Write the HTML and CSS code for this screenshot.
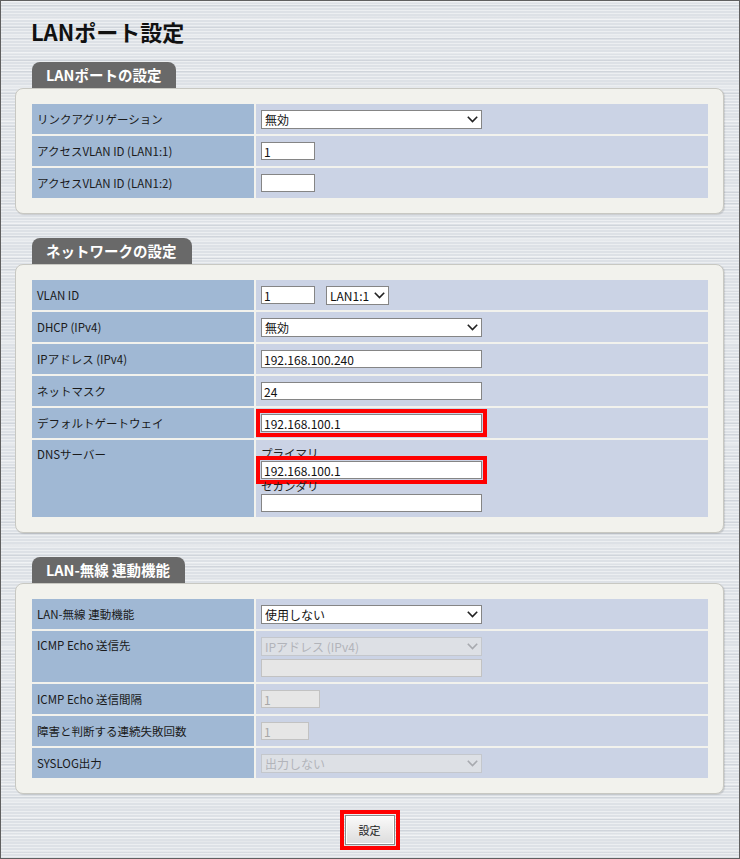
FILE: index.html
```html
<!DOCTYPE html>
<html lang="ja">
<head>
    <meta charset="UTF-8">
    <title>LANポート設定</title>
    <link rel="stylesheet" href="styles.css">
</head>
<body>
    <div class="page">
        <h1 class="page-title">LANポート設定</h1>

        <section class="group">
            <h2 class="group-tab">LANポートの設定</h2>
            <div class="group-box">
                <div class="form-grid">
                    <div class="label">リンクアグリゲーション</div>
                    <div class="value">
                        <select class="select-wide"><option>無効</option></select>
                    </div>
                    <div class="label">アクセスVLAN ID (LAN1:1)</div>
                    <div class="value"><input type="text" class="input-short" value="1"></div>
                    <div class="label">アクセスVLAN ID (LAN1:2)</div>
                    <div class="value"><input type="text" class="input-short" value=""></div>
                </div>
            </div>
        </section>

        <section class="group">
            <h2 class="group-tab">ネットワークの設定</h2>
            <div class="group-box">
                <div class="form-grid">
                    <div class="label">VLAN ID</div>
                    <div class="value">
                        <input type="text" class="input-short" value="1">
                        <select class="select-port"><option>LAN1:1</option></select>
                    </div>
                    <div class="label">DHCP (IPv4)</div>
                    <div class="value">
                        <select class="select-wide"><option>無効</option></select>
                    </div>
                    <div class="label">IPアドレス (IPv4)</div>
                    <div class="value"><input type="text" class="input-wide" value="192.168.100.240"></div>
                    <div class="label">ネットマスク</div>
                    <div class="value"><input type="text" class="input-wide" value="24"></div>
                    <div class="label">デフォルトゲートウェイ</div>
                    <div class="value"><input type="text" class="input-wide marked" value="192.168.100.1"></div>
                    <div class="label label-top">DNSサーバー</div>
                    <div class="value value-stack">
                        <span class="caption">プライマリ</span>
                        <input type="text" class="input-wide marked" value="192.168.100.1">
                        <span class="caption">セカンダリ</span>
                        <input type="text" class="input-wide" value="">
                    </div>
                </div>
            </div>
        </section>

        <section class="group">
            <h2 class="group-tab">LAN-無線 連動機能</h2>
            <div class="group-box">
                <div class="form-grid">
                    <div class="label">LAN-無線 連動機能</div>
                    <div class="value">
                        <select class="select-wide"><option>使用しない</option></select>
                    </div>
                    <div class="label label-top">ICMP Echo 送信先</div>
                    <div class="value value-stack value-pair">
                        <select class="select-wide" disabled><option>IPアドレス (IPv4)</option></select>
                        <input type="text" class="input-wide" value="" disabled>
                    </div>
                    <div class="label">ICMP Echo 送信間隔</div>
                    <div class="value"><input type="text" class="input-interval" value="1" disabled></div>
                    <div class="label">障害と判断する連続失敗回数</div>
                    <div class="value"><input type="text" class="input-count" value="1" disabled></div>
                    <div class="label">SYSLOG出力</div>
                    <div class="value">
                        <select class="select-wide" disabled><option>出力しない</option></select>
                    </div>
                </div>
            </div>
        </section>

        <div class="actions">
            <button class="submit-button marked">設定</button>
        </div>
    </div>
</body>
</html>
```

FILE: styles.css
```css
html, body {
    margin: 0;
    padding: 0;
}

body {
    font-family: "Noto Sans CJK JP", "Noto Sans", sans-serif;
    color: #222;
}

.page {
    box-sizing: border-box;
    height: 859px;
    padding: 16px 15px 0 14px;
    border: 1px solid #606060;
    background-color: #dde1e6;
    background-image:
        repeating-linear-gradient(to bottom, rgba(255,255,255,0.45) 0 1px, transparent 1px 3px),
        repeating-linear-gradient(to bottom, transparent 0 4px, rgba(150,158,170,0.18) 4px 5px, transparent 5px 11px),
        repeating-linear-gradient(to bottom, rgba(255,255,255,0.25) 0 2px, transparent 2px 17px);
}

.page-title {
    margin: 0 0 17px 16px;
    font-size: 22px;
    line-height: 28px;
    font-weight: bold;
    color: #111;
}

.group {
    margin-bottom: 24px;
}

.group-tab {
    width: fit-content;
    margin: 0 0 0 17px;
    padding: 0 15px 0 14px;
    height: 26px;
    line-height: 26px;
    font-size: 14.5px;
    font-weight: bold;
    color: #fff;
    background: #696969;
    border-radius: 8px 8px 0 0;
}

.group-box {
    padding: 15px 15px 15px 16px;
    background: #f2f2ed;
    border: 1px solid #c8c8c2;
    border-radius: 8px;
    box-shadow: 1px 1px 1px rgba(0,0,0,0.12);
}

.form-grid {
    display: grid;
    grid-template-columns: 222px 1fr;
    grid-auto-rows: minmax(30px, auto);
    gap: 2px;
}

.label {
    display: flex;
    align-items: center;
    padding: 0 5px;
    background: #a0b8d4;
    font-size: 11.5px;
    line-height: 16px;
    color: #1a1a1a;
}

.label-top {
    align-items: flex-start;
    padding-top: 6px;
}

.value {
    display: flex;
    align-items: center;
    gap: 11px;
    padding: 0 5px;
    background: #cbd3e5;
}

.value-stack {
    flex-direction: column;
    align-items: flex-start;
    gap: 0;
    padding-top: 6px;
    padding-bottom: 5px;
}

.value-pair {
    gap: 3px;
    padding-bottom: 5px;
}

.caption {
    display: block;
    font-size: 11.5px;
    line-height: 15px;
    color: #222;
}

.caption + input {
    margin-bottom: 1px;
}

input[type="text"], select {
    box-sizing: border-box;
    margin: 0;
    font-family: "Noto Sans CJK JP", "Noto Sans", sans-serif;
    font-size: 12px;
    color: #111;
    background-color: #fff;
    border: 1px solid #858585;
    border-radius: 0;
}

input[type="text"] {
    height: 18px;
    padding: 0 2px;
}

select {
    -webkit-appearance: none;
    appearance: none;
    height: 19px;
    padding: 0 18px 0 3px;
    background-image: url("data:image/svg+xml,%3Csvg xmlns='http://www.w3.org/2000/svg' width='11' height='7'%3E%3Cpath d='M0.8 0.8 L5.5 5.6 L10.2 0.8' fill='none' stroke='%23222' stroke-width='1.6'/%3E%3C/svg%3E");
    background-repeat: no-repeat;
    background-position: right 3px center;
}

input[type="text"]:disabled, select:disabled {
    color: #a8a8a8;
    background-color: #e6e6e6;
    border-color: #c2c2c2;
}

select:disabled {
    background-image: url("data:image/svg+xml,%3Csvg xmlns='http://www.w3.org/2000/svg' width='11' height='7'%3E%3Cpath d='M0.8 0.8 L5.5 5.6 L10.2 0.8' fill='none' stroke='%23999' stroke-width='1.6'/%3E%3C/svg%3E");
}

.select-wide, .input-wide {
    width: 221px;
}

.input-short {
    width: 54px;
}

.select-port {
    width: 63px;
}

.input-interval {
    width: 59px;
}

.input-count {
    width: 48px;
}

.marked {
    outline: 4px solid #f00;
    outline-offset: 1px;
}

.actions {
    display: flex;
    justify-content: center;
    margin-top: -3px;
}

.submit-button {
    width: 50px;
    height: 30px;
    font-family: "Noto Sans CJK JP", sans-serif;
    font-size: 11px;
    color: #222;
    background: linear-gradient(#fafafa, #dcdcdc);
    border: 1px solid #8a8a8a;
    box-shadow: inset 0 0 0 1px #fff;
    border-radius: 0;
}
```
